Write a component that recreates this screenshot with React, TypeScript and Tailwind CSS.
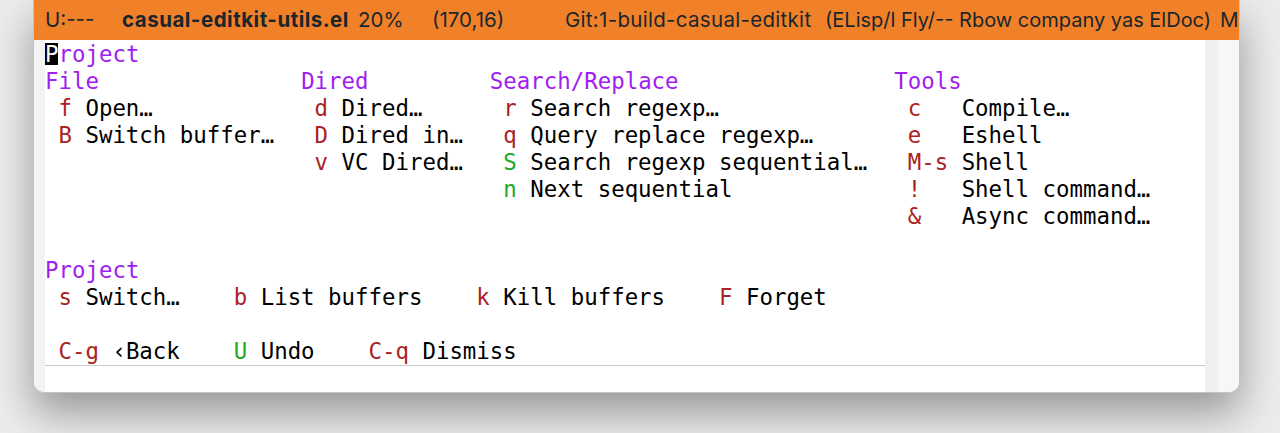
import type { ReactNode } from "react";

const RED = "text-[#aa2222]";
const GREEN = "text-[#22aa22]";

type Item = { k: string; label: string; stay?: boolean };

function Key({ k, stay, w }: { k: string; stay?: boolean; w: string }) {
  return <span className={`inline-block ${w} ${stay ? GREEN : RED}`}>{k}</span>;
}

function Column({ title, width, items, keyW = "w-[2ch]" }: { title: string; width: string; items: Item[]; keyW?: string }) {
  return (
    <div className={`${width} shrink-0`}>
      <div className="text-[#a020f0]">{title}</div>
      {items.map((it) => (
        <div key={it.k} className="pl-[1ch] whitespace-pre">
          <Key k={it.k} stay={it.stay} w={keyW} />
          {it.label}
        </div>
      ))}
    </div>
  );
}

function Cell({ width, children }: { width: string; children: ReactNode }) {
  return <div className={`${width} shrink-0 pl-[1ch] whitespace-pre`}>{children}</div>;
}

export default function App() {
  return (
    <div className="h-[433px] w-full overflow-hidden bg-[#ececec] pl-[33px]">
      <div className="h-[393px] w-[1207px] overflow-hidden rounded-b-[11px] border border-t-0 border-[#c4c4c4] bg-white shadow-[0_20px_42px_rgba(0,0,0,0.36)]">
        {/* mode line */}
        <div className="flex h-[40px] items-center whitespace-nowrap bg-[#f08128] pl-[11px] font-['Inter',sans-serif] text-[20.5px] text-[#1a262c]">
          <span className="w-[77px] shrink-0">U:---</span>
          <span className="w-[236px] shrink-0 font-bold tracking-[0.5px]">casual-editkit-utils.el</span>
          <span className="w-[74px] shrink-0">20%</span>
          <span className="w-[133px] shrink-0">(170,16)</span>
          <span className="w-[260px] shrink-0 tracking-[0.3px]">Git:1-build-casual-editkit</span>
          <span className="w-[395px] shrink-0 text-[20px]">(ELisp/l Fly/-- Rbow company yas ElDoc)</span>
          <span>M</span>
        </div>

        <div className="flex h-[353px]">
          <div className="w-[11px] shrink-0 bg-[#f3f3f3]" />
          <div className="flex-1 pt-px font-['DejaVu_Sans_Mono',monospace] text-[22.4px] leading-[27px] text-black">
            <div className="whitespace-pre text-[#a020f0]">
              <span className="inline-block h-[22px] bg-black leading-[22px] text-white">P</span>roject
            </div>
            <div className="flex">
              <Column
                title="File"
                width="w-[19ch]"
                items={[
                  { k: "f", label: "Open…" },
                  { k: "B", label: "Switch buffer…" },
                ]}
              />
              <Column
                title="Dired"
                width="w-[14ch]"
                items={[
                  { k: "d", label: "Dired…" },
                  { k: "D", label: "Dired in…" },
                  { k: "v", label: "VC Dired…" },
                ]}
              />
              <Column
                title="Search/Replace"
                width="w-[30ch]"
                items={[
                  { k: "r", label: "Search regexp…" },
                  { k: "q", label: "Query replace regexp…" },
                  { k: "S", label: "Search regexp sequential…", stay: true },
                  { k: "n", label: "Next sequential", stay: true },
                ]}
              />
              <Column
                title="Tools"
                width="flex-1"
                keyW="w-[4ch]"
                items={[
                  { k: "c", label: "Compile…" },
                  { k: "e", label: "Eshell" },
                  { k: "M-s", label: "Shell" },
                  { k: "!", label: "Shell command…" },
                  { k: "&", label: "Async command…" },
                ]}
              />
            </div>
            <div className="h-[27px]" />
            <div className="text-[#a020f0]">Project</div>
            <div className="flex">
              <Cell width="w-[13ch]">
                <span className={RED}>s</span> Switch…
              </Cell>
              <Cell width="w-[18ch]">
                <span className={RED}>b</span> List buffers
              </Cell>
              <Cell width="w-[18ch]">
                <span className={RED}>k</span> Kill buffers
              </Cell>
              <Cell width="flex-1">
                <span className={RED}>F</span> Forget
              </Cell>
            </div>
            <div className="h-[27px]" />
            <div className="flex">
              <Cell width="w-[13ch]">
                <span className={RED}>C-g</span> ‹Back
              </Cell>
              <Cell width="w-[10ch]">
                <span className={GREEN}>U</span> Undo
              </Cell>
              <Cell width="flex-1">
                <span className={RED}>C-q</span> Dismiss
              </Cell>
            </div>
            <div className="h-px bg-[#c8c8c8]" />
          </div>
          <div className="w-[13px] shrink-0 bg-[#efefef]" />
          <div className="w-[21px] shrink-0 bg-[#f7f7f7]" />
        </div>
      </div>
    </div>
  );
}
